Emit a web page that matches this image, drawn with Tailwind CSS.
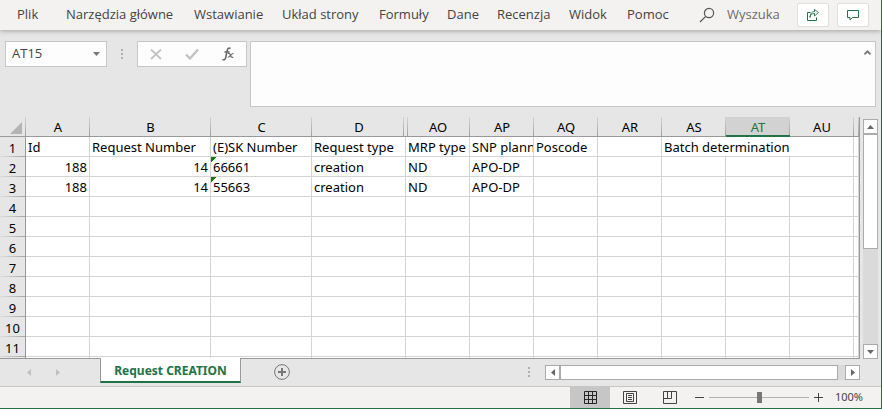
<!DOCTYPE html>
<html lang="pl">
<head>
<meta charset="utf-8">
<title>Request CREATION</title>
<script src="https://cdn.jsdelivr.net/npm/@tailwindcss/browser@4"></script>
</head>
<body class="flex min-h-screen flex-col overflow-hidden border-r border-b border-[#217346] bg-[#e6e6e6] font-['Noto_Sans',sans-serif] text-xs text-[#444444]">
<header class="z-10 flex h-[30px] shrink-0 items-center bg-[#f3f2f1] font-['Open_Sans',sans-serif] text-[13px] shadow-[0_1px_5px_rgba(0,0,0,0.3)]">
  <nav aria-label="Menu" class="grid flex-1 grid-cols-[49px_128px_88px_97px_68px_50px_72px_58px_auto] pl-[17px] whitespace-nowrap">
    <a href="#">Plik</a><a href="#">Narzędzia główne</a><a href="#">Wstawianie</a><a href="#">Układ strony</a><a href="#">Formuły</a><a href="#">Dane</a><a href="#">Recenzja</a><a href="#">Widok</a><a href="#">Pomoc</a>
  </nav>
  <label class="flex items-center gap-3">
    <svg class="size-4" viewBox="0 0 16 16" fill="none" stroke="#555" stroke-width="1.2" aria-hidden="true"><circle cx="10" cy="6" r="4.6"/><path d="M6.7 9.3 1 15"/></svg>
    <input type="text" aria-label="Wyszukaj" placeholder="Wyszuka" class="w-[58px] bg-transparent placeholder-[#6b6b6b] outline-none">
  </label>
  <div class="ml-3 flex gap-2 pr-3">
    <button aria-label="Udostępnij" class="flex h-6 w-8 items-center justify-center rounded-xs border border-[#e1dfdd] bg-white">
      <svg class="size-3" viewBox="0 0 12 12" fill="none" stroke="#217346" aria-hidden="true"><path d="M3.500 3.500h-3v8h9V8.500"/><path d="M3 8.500C3 6 4.500 4.500 7.500 4.500V7l4-3.500-4-3v2C5 2.800 3 4.500 3 8.500z" stroke-width=".9"/></svg>
    </button>
    <button aria-label="Komentarze" class="flex h-6 w-8 items-center justify-center rounded-xs border border-[#e1dfdd] bg-white">
      <svg class="size-3" viewBox="0 0 12 12" fill="none" stroke="#217346" aria-hidden="true"><path d="M.5 1.500h11v7H5.500L3 11V8.500H.5z"/></svg>
    </button>
  </div>
</header>

<section aria-label="Pasek formuły" class="flex h-[87px] shrink-0 items-start pt-[11px] pr-[5px] pl-[5px] font-['Open_Sans',sans-serif] text-[13px]">
  <div class="flex h-[26px] w-[102px] items-center border border-[#c6c6c6] bg-[#fdfdfd]">
    <input type="text" aria-label="Pole nazwy" value="AT15" class="min-w-0 flex-1 bg-transparent pl-1.5 outline-none">
    <button aria-label="Lista nazw" class="px-1.5"><svg class="h-1 w-[7px]" viewBox="0 0 7 4" fill="#777" aria-hidden="true"><path d="M0 0h7L3.500 4z"/></svg></button>
  </div>
  <svg class="mx-3.5 mt-2 h-[10px] w-[2px]" viewBox="0 0 2 10" fill="#b0b0b0" aria-hidden="true"><path d="M0 0h2v2H0zM0 4h2v2H0zM0 8h2v2H0z"/></svg>
  <div class="flex h-[26px] w-[110px] items-center justify-between border border-[#c6c6c6] bg-[#fdfdfd] px-3">
    <button aria-label="Anuluj"><svg class="h-3 w-3" viewBox="0 0 12 12" fill="none" stroke="#c3c3c3" stroke-width="1.800" aria-hidden="true"><path d="M1 1.500l10 9.500M11 1.500L1 11"/></svg></button>
    <button aria-label="Wpis"><svg class="h-3 w-3.5" viewBox="0 0 14 12" fill="none" stroke="#c3c3c3" stroke-width="2.400" aria-hidden="true"><path d="M1 6.500l4 4 8-9"/></svg></button>
    <button aria-label="Wstaw funkcję"><svg class="h-3.5 w-3" viewBox="0 0 12 14" fill="none" stroke="#666" stroke-width="1.500" aria-hidden="true"><path d="M8.500 1.500C6.500.3 5.600 1.500 5.200 3.500L3.700 10.500C3.300 12.500 2.200 13.300.5 12.500M2.500 5h5"/><path d="M6 6.500c1.500-.3 1.800 0 2.500 2s1 2.300 2.800 1.700M11.500 6.500C9.500 6 7.500 10.800 5.800 10.200" stroke-width="1.200"/></svg></button>
  </div>
  <div class="ml-[3px] flex h-[66px] flex-1 items-start border border-[#c6c6c6] bg-[#fdfdfd]">
    <textarea aria-label="Formuła" class="h-full flex-1 resize-none p-1 outline-none"></textarea>
    <button aria-label="Zwiń pasek formuły" class="mt-2 mr-1"><svg class="block h-[5px] w-[7px]" viewBox="0 0 7 5" fill="none" stroke="#777" stroke-width="1.800" aria-hidden="true"><path d="M.5 4.300l3-3 3 3"/></svg></button>
  </div>
</section>

<main class="flex min-h-0 flex-1">
  <div class="h-[242px] min-w-0 flex-1 overflow-hidden border-r border-b border-[#999999] bg-white">
    <table class="w-full table-fixed border-separate border-spacing-0 font-['Noto_Sans',sans-serif] text-[13px] leading-[17px] whitespace-nowrap text-black [&_td]:overflow-hidden [&_td]:border-r [&_td]:border-b [&_td]:border-[#d4d4d4] [&_td]:px-0.5 [&_td]:pt-0.5 [&_th]:p-0 [&_th]:pt-0.5 [&_th]:font-normal [&_tr]:h-5 [&_tbody_th]:border-r [&_tbody_th]:border-[#999999] [&_tbody_th]:bg-[#e6e6e6] [&_tbody_th]:bg-[linear-gradient(90deg,#dddddd,#a6a6a6)] [&_tbody_th]:bg-[size:100%_1px] [&_tbody_th]:bg-bottom [&_tbody_th]:bg-no-repeat [&_thead_th]:border-b [&_thead_th]:border-[#999999] [&_thead_th]:bg-[#e6e6e6] [&_thead_th]:bg-[linear-gradient(#d4d4d4,#a0a0a0)] [&_thead_th]:bg-[size:1px_100%] [&_thead_th]:bg-right [&_thead_th]:bg-no-repeat">
      <colgroup><col class="w-[26px]"><col class="w-16"><col class="w-[121px]"><col class="w-[101px]"><col class="w-[94px]"><col class="w-16"><col class="w-16"><col class="w-16"><col class="w-16"><col class="w-16"><col class="w-16"><col class="w-16"><col></colgroup>
      <thead>
        <tr>
          <th><svg class="ml-[10px] size-3" viewBox="0 0 12 12" fill="#b4b4b4" role="img" aria-label="Zaznacz wszystko"><path d="M12 0v12H0z"/></svg></th>
          <th>A</th><th>B</th><th>C</th>
          <th class="bg-[position:right_2px_top]!">D</th>
          <th class="bg-[linear-gradient(#d4d4d4,#a0a0a0),linear-gradient(#d4d4d4,#a0a0a0)]! bg-[position:left_1px_top,right_top]!">AO</th>
          <th>AP</th><th>AQ</th><th>AR</th><th>AS</th>
          <th class="border-b-2! border-[#217346]! bg-[#d2d2d2]! leading-4 text-[#217346]">AT</th>
          <th>AU</th><th></th>
        </tr>
      </thead>
      <tbody>
        <tr><th>1</th><td>Id</td><td>Request Number</td><td>(E)SK Number</td><td>Request type</td><td>MRP type</td><td>SNP plann</td><td>Poscode</td><td></td><td colspan="3">Batch determination</td><td></td></tr>
        <tr><th>2</th><td class="text-right">188</td><td class="text-right">14</td><td class="bg-[linear-gradient(135deg,#107c10_4px,transparent_4px)]">66661</td><td>creation</td><td>ND</td><td>APO-DP</td><td></td><td></td><td></td><td></td><td></td><td></td></tr>
        <tr><th>3</th><td class="text-right">188</td><td class="text-right">14</td><td class="bg-[linear-gradient(135deg,#107c10_4px,transparent_4px)]">55663</td><td>creation</td><td>ND</td><td>APO-DP</td><td></td><td></td><td></td><td></td><td></td><td></td></tr>
        <tr><th>4</th><td></td><td></td><td></td><td></td><td></td><td></td><td></td><td></td><td></td><td></td><td></td><td></td></tr>
        <tr><th>5</th><td></td><td></td><td></td><td></td><td></td><td></td><td></td><td></td><td></td><td></td><td></td><td></td></tr>
        <tr><th>6</th><td></td><td></td><td></td><td></td><td></td><td></td><td></td><td></td><td></td><td></td><td></td><td></td></tr>
        <tr><th>7</th><td></td><td></td><td></td><td></td><td></td><td></td><td></td><td></td><td></td><td></td><td></td><td></td></tr>
        <tr><th>8</th><td></td><td></td><td></td><td></td><td></td><td></td><td></td><td></td><td></td><td></td><td></td><td></td></tr>
        <tr><th>9</th><td></td><td></td><td></td><td></td><td></td><td></td><td></td><td></td><td></td><td></td><td></td><td></td></tr>
        <tr><th>10</th><td></td><td></td><td></td><td></td><td></td><td></td><td></td><td></td><td></td><td></td><td></td><td></td></tr>
        <tr><th>11</th><td></td><td></td><td></td><td></td><td></td><td></td><td></td><td></td><td></td><td></td><td></td><td></td></tr>
        <tr><th></th><td></td><td></td><td></td><td></td><td></td><td></td><td></td><td></td><td></td><td></td><td></td><td></td></tr>
      </tbody>
    </table>
  </div>
  <div class="mx-[3px] mt-0.5 flex h-60 w-[15px] flex-col bg-[#dadada]">
    <button aria-label="Przewiń w górę" class="flex h-[15px] shrink-0 items-center justify-center border border-[#ababab] bg-white"><svg class="h-1 w-[7px]" viewBox="0 0 7 4" fill="#666" aria-hidden="true"><path d="M0 4h7L3.500 0z"/></svg></button>
    <div class="h-[115px] border border-[#ababab] bg-white"></div>
    <button aria-label="Przewiń w dół" class="mt-auto flex h-[15px] shrink-0 items-center justify-center border border-[#ababab] bg-white"><svg class="h-1 w-[7px]" viewBox="0 0 7 4" fill="#666" aria-hidden="true"><path d="M0 0h7L3.500 4z"/></svg></button>
  </div>
</main>

<section aria-label="Arkusze" class="flex h-7 shrink-0 items-start border-b border-[#c6c6c6] pr-[21px]">
  <div class="flex w-[100px] items-center gap-[25px] pt-[10px] pl-[27px]">
    <button aria-label="Poprzedni arkusz"><svg class="block h-[7px] w-1" viewBox="0 0 4 7" fill="#c0c0c0" aria-hidden="true"><path d="M4 0v7L0 3.500z"/></svg></button>
    <button aria-label="Następny arkusz"><svg class="block h-[7px] w-1" viewBox="0 0 4 7" fill="#c0c0c0" aria-hidden="true"><path d="M0 0v7l4-3.500z"/></svg></button>
  </div>
  <button class="-mt-px h-[25px] w-[141px] border-x border-b-2 border-x-[#999999] border-b-[#217346] bg-white pt-0.5 font-bold whitespace-nowrap text-[#217346]">Request CREATION</button>
  <button aria-label="Nowy arkusz" class="mt-[5px] ml-[33px]"><svg class="block size-4" viewBox="0 0 16 16" fill="none" stroke="#777" aria-hidden="true"><circle cx="8" cy="8" r="7.400"/><path d="M8 4v8M4 8h8" stroke-width="2"/></svg></button>
  <svg class="mt-2 ml-auto h-[10px] w-[2px]" viewBox="0 0 2 10" fill="#b0b0b0" aria-hidden="true"><path d="M0 0h2v2H0zM0 4h2v2H0zM0 8h2v2H0z"/></svg>
  <div class="mt-[6px] ml-[15px] flex h-[15px] w-[315px] bg-[#dadada]">
    <button aria-label="Przewiń w lewo" class="flex w-[15px] items-center justify-center border border-[#ababab] bg-white"><svg class="h-[7px] w-1" viewBox="0 0 4 7" fill="#666" aria-hidden="true"><path d="M4 0v7L0 3.500z"/></svg></button>
    <div class="w-[278px] border border-[#ababab] bg-white"></div>
    <button aria-label="Przewiń w prawo" class="ml-auto flex w-[15px] items-center justify-center border border-[#ababab] bg-white"><svg class="h-[7px] w-1" viewBox="0 0 4 7" fill="#666" aria-hidden="true"><path d="M0 0v7l4-3.500z"/></svg></button>
  </div>
</section>

<footer class="flex h-[21px] shrink-0 items-center justify-end bg-[#f3f2f1] pr-[18px]">
  <button aria-label="Normalny" class="flex h-full w-10 items-center justify-center bg-[#c6c6c6]"><svg class="h-[13px] w-[13px]" viewBox="0 0 13 13" fill="none" stroke="#262626" aria-hidden="true"><path d="M.5.5h12v12H.5zM4.500.5v12M8.500.5v12M.5 4.500h12M.5 8.500h12"/></svg></button>
  <button aria-label="Układ strony" class="flex h-full w-10 items-center justify-center"><svg class="h-[13px] w-[14px]" viewBox="0 0 14 13" fill="none" stroke="#444" aria-hidden="true"><path d="M.5.5h13v12H.5zM3.500 2.500h7v8h-7zM5 4.500h4M5 6.500h4M5 8.500h4"/></svg></button>
  <button aria-label="Podgląd podziału stron" class="flex h-full w-10 items-center justify-center"><svg class="h-[13px] w-[14px]" viewBox="0 0 14 13" fill="none" stroke="#444" aria-hidden="true"><path d="M.5.5h13v12H.5zM.5 7.500h8M4.500.5v7M8.500.5v7"/></svg></button>
  <button aria-label="Pomniejsz" class="ml-[5px]"><svg class="block size-[9px]" viewBox="0 0 9 9" stroke="#444" aria-hidden="true"><path d="M0 4.500h9"/></svg></button>
  <input type="range" min="0" max="100" value="50" aria-label="Powiększenie" class="mx-[5px] h-[11px] w-[100px] appearance-none bg-[linear-gradient(#b0b0b0,#b0b0b0)] bg-[size:100%_1px] bg-center bg-no-repeat [&::-webkit-slider-thumb]:h-[11px] [&::-webkit-slider-thumb]:w-[5px] [&::-webkit-slider-thumb]:appearance-none [&::-webkit-slider-thumb]:bg-[#777777]">
  <button aria-label="Powiększ"><svg class="block size-[9px]" viewBox="0 0 9 9" stroke="#444" aria-hidden="true"><path d="M0 4.500h9M4.500 0v9"/></svg></button>
  <button class="ml-2.5 w-[30px] text-right text-[11px]">100%</button>
</footer>
</body>
</html>
